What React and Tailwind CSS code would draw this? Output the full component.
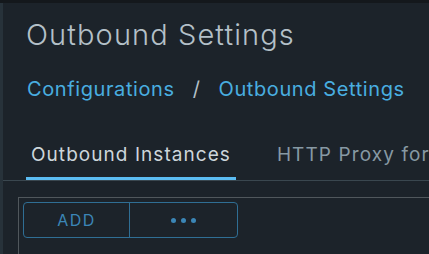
import React from 'react';

const font = { fontFamily: 'Inter, "Noto Sans", sans-serif' };

export default function App() {
  return (
    <div className="w-[429px] h-[254px] overflow-hidden bg-[#1c232a] flex flex-col" style={font}>
      <div className="h-[3px] bg-[#14181c]" />
      <div className="flex flex-1 min-h-0">
        <div className="w-[3px] bg-[#27323a]" />
        <div className="flex-1 min-w-0 flex flex-col">
          <h1 className="pl-[23px] pt-[14px] text-[29px] leading-[36px] tracking-[1.1px] font-light text-[#b4c0c8] whitespace-nowrap">
            Outbound Settings
          </h1>
          <div className="pl-[24px] mt-[24px] flex items-center text-[20px] leading-[24px] tracking-[0.6px] text-[#49aee0] whitespace-nowrap">
            <span>Configurations</span>
            <span className="mx-[18px] text-[#b4c0c8]">/</span>
            <span>Outbound Settings</span>
          </div>
          <div className="mt-[42px] flex border-b border-[#3a474f] whitespace-nowrap overflow-hidden">
            <div className="ml-[23px] px-[5px] pb-[10px] border-b-4 border-[#5bbcf2] -mb-px text-[19px] leading-[24px] tracking-[1.05px] text-[#cdd6db]">
              Outbound Instances
            </div>
            <div className="ml-[41px] text-[19px] leading-[24px] tracking-[1.1px] text-[#8799a3]">HTTP Proxy for Outbound</div>
          </div>
          <div className="ml-[15px] mt-[16px] flex-1 border-t border-l border-[#50575c] pl-[4px] pt-[4px]">
            <div className="flex w-[215px] h-[36px] border border-[#2f6e94] rounded-[4px]">
              <button className="w-[105px] text-[16px] tracking-[1.5px] text-[#3b86b6]">ADD</button>
              <button className="flex-1 border-l border-[#2f6e94] flex items-center justify-center gap-[5px]">
                <span className="w-[5px] h-[5px] rounded-full bg-[#3b86b6]" />
                <span className="w-[5px] h-[5px] rounded-full bg-[#3b86b6]" />
                <span className="w-[5px] h-[5px] rounded-full bg-[#3b86b6]" />
              </button>
            </div>
          </div>
        </div>
      </div>
    </div>
  );
}
